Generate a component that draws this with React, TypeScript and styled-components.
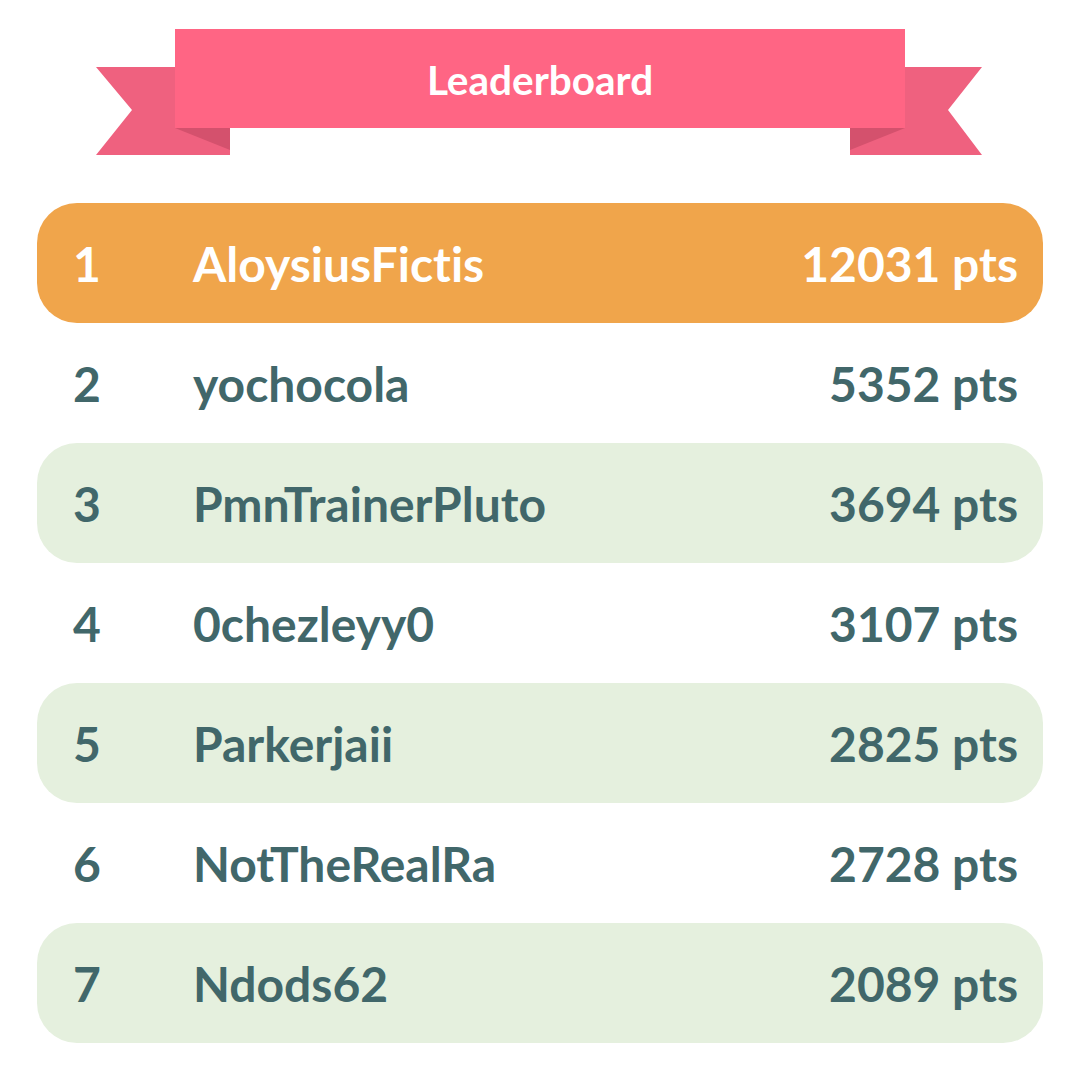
import React from "react";
import styled, { createGlobalStyle } from "styled-components";

const GlobalStyle = createGlobalStyle`
  html, body { margin: 0; padding: 0; background: #ffffff; }
  body { font-family: Lato, "Open Sans", sans-serif; font-variant-ligatures: none; }
`;

const Page = styled.div`
  width: 1080px;
  min-height: 1072px;
  background: #ffffff;
  display: flex;
  flex-direction: column;
  align-items: stretch;
`;

const Header = styled.header`
  display: flex;
  justify-content: flex-start;
  padding: 29px 0 0 96px;
  height: 203px;
  box-sizing: border-box;
`;

const Ribbon = styled.div`
  position: relative;
  width: 886px;
  height: 126px;
`;

const RibbonArt = styled.svg`
  position: absolute;
  left: 0;
  top: 0;
  width: 886px;
  height: 126px;
`;

const Band = styled.div`
  position: relative;
  margin-left: 79px;
  width: 730px;
  height: 99px;
  background: #ff6584;
  display: flex;
  align-items: center;
  justify-content: center;
`;

const Title = styled.h1`
  margin: 0;
  padding-top: 2px;
  color: #ffffff;
  font-family: Lato, "Open Sans", sans-serif;
  font-weight: 700;
  font-size: 40.5px;
  letter-spacing: 0;
  font-variant-ligatures: none;
`;

const List = styled.ol`
  list-style: none;
  margin: 0;
  padding: 0 37px;
  display: flex;
  flex-direction: column;
`;

const Row = styled.li<{ $variant: "gold" | "tint" | "plain" }>`
  height: 120px;
  border-radius: 40px;
  display: grid;
  grid-template-columns: 120px 1fr auto;
  align-items: center;
  padding: 0 25px 0 36px;
  box-sizing: border-box;
  font-family: Lato, "Open Sans", sans-serif;
  font-weight: 700;
  font-size: 48px;
  font-variant-ligatures: none;
  background: ${(p) =>
    p.$variant === "gold" ? "#f0a54b" : p.$variant === "tint" ? "#e5f0de" : "transparent"};
  color: ${(p) => (p.$variant === "gold" ? "#ffffff" : "#41676a")};
`;

const Rank = styled.span``;
const Name = styled.span``;
const Points = styled.span`
  text-align: right;
`;

const players = [
  { name: "AloysiusFictis", pts: 12031 },
  { name: "yochocola", pts: 5352 },
  { name: "PmnTrainerPluto", pts: 3694 },
  { name: "0chezleyy0", pts: 3107 },
  { name: "Parkerjaii", pts: 2825 },
  { name: "NotTheRealRa", pts: 2728 },
  { name: "Ndods62", pts: 2089 },
];

export default function App() {
  return (
    <Page>
      <GlobalStyle />
      <Header>
        <Ribbon>
          <RibbonArt viewBox="0 0 886 126">
            <polygon points="0,38 134,38 134,126 0,126 36,81" fill="#ef617f" />
            <polygon points="79,99 134,99 134,121" fill="#d4516d" />
            <polygon points="754,38 886,38 852,81 886,126 754,126" fill="#ef617f" />
            <polygon points="754,99 809,99 754,121" fill="#d4516d" />
          </RibbonArt>
          <Band>
            <Title>Leaderboard</Title>
          </Band>
        </Ribbon>
      </Header>
      <List>
        {players.map((p, i) => (
          <Row key={p.name} $variant={i === 0 ? "gold" : i % 2 === 0 ? "tint" : "plain"}>
            <Rank>{i + 1}</Rank>
            <Name>{p.name}</Name>
            <Points>{p.pts} pts</Points>
          </Row>
        ))}
      </List>
    </Page>
  );
}
